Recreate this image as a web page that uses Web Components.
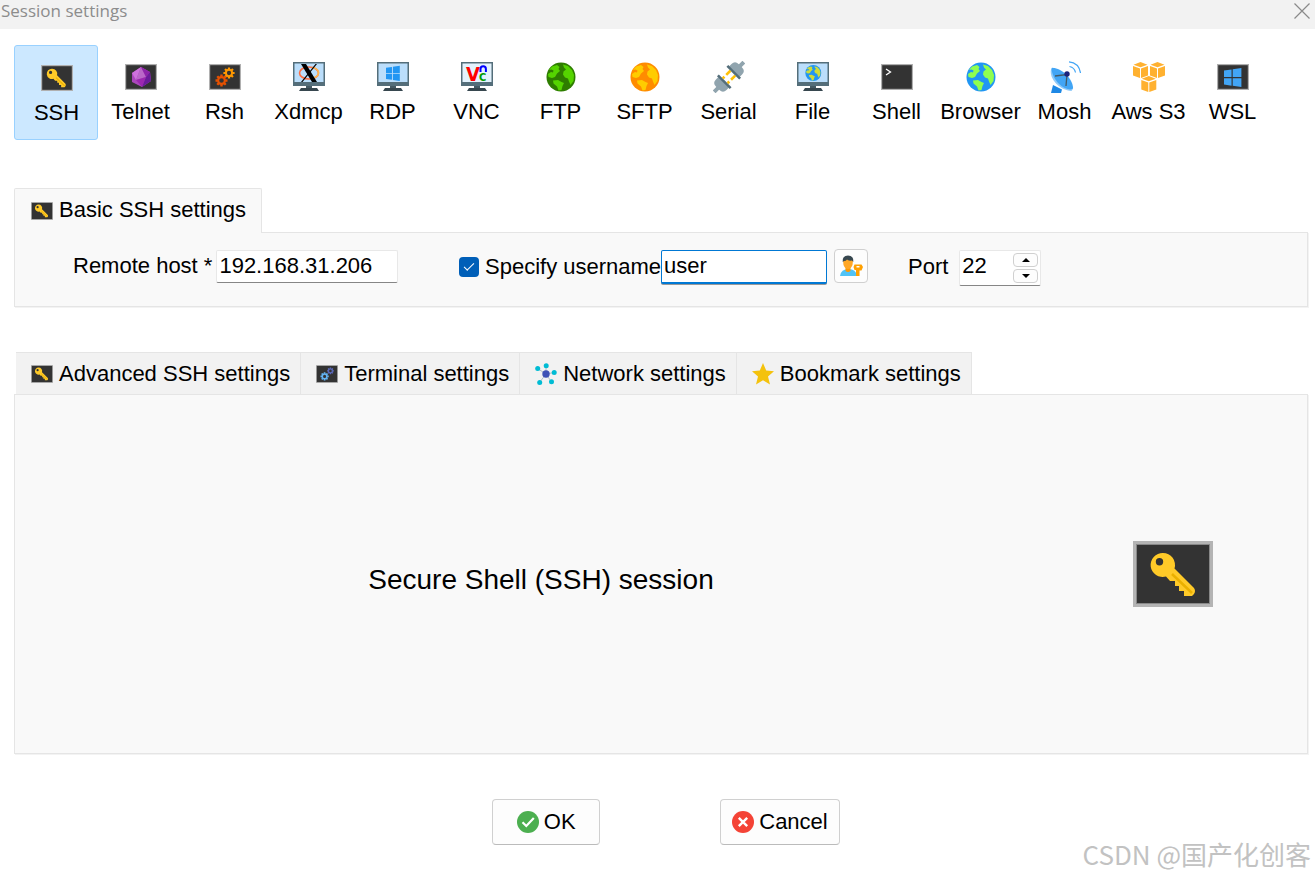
<!DOCTYPE html>
<html lang="en">
<head>
<meta charset="utf-8">
<title>Session settings</title>
<style>
  body { margin: 0; min-height: 100vh; background: #fff; color: #000; font: 22px/26px "Liberation Sans", Arial, sans-serif; }
</style>
</head>
<body>
<session-window></session-window>

<script>
const land = '<path d="M18 3.500l5 1.500 4 4 2 5-.5 6-3 4-1.500-3.500-1-3-3-1-2-3 .5-3 2.500-2-2-2z"/><path d="M4 9l3-3.500 5-1.500 2.500 2-1 2 1.500 2-3 2.500-2 3.500-3 1-3.500-1-.5-3 3-2 2 .5.5-2-2-1z"/><path d="M8 19.500l5-.5 3.500 2 2.500 1-1.500 3-1 4-3 .5-1.500-4-3.500-3z"/>';
const globe = (sea, soil) => `<circle cx="16" cy="16" r="14.500" fill="${sea}"/><g fill="${soil}">${land}</g>`;
const term = inner => `<path fill="#b0b0b0" d="M0 0h32v26H0z"/><path fill="#333" d="M1.200 1.200h29.600v23.600H1.200z"/>${inner}`;
const monitor = (inner, screen = '#bbdefb') => `<path fill="#546e7a" d="M0 1h32v24H0z"/><path fill="${screen}" d="M1.500 2.500h29V21h-29z"/><path fill="#455a64" d="M13 25h6v2h-6z"/><path fill="#37474f" d="M8 27h16l2 3H6z"/>${inner}`;
const flag = (x, y, s, c) => `<g transform="translate(${x} ${y}) scale(${s})" fill="${c}"><path d="M0 2l6.500-1v6.500H0zM7.500.85L15-.2v7.700H7.500zM0 8.500h6.500V15L0 14zM7.500 8.500H15v7.700l-7.500-1.050z"/></g>`;
const gear = (x, y, r, c) => `<g transform="translate(${x} ${y})" stroke="${c}" fill="none"><circle r="${r * .56}" stroke-width="${r * .36}"/>${[0, 45, 90, 135].map(a => `<path transform="rotate(${a})" stroke-width="${r * .4}" d="M0 ${-r}V${-r * .62}M0 ${r}V${r * .62}"/>`).join('')}</g>`;
const cube = (x, y) => `<g transform="translate(${x} ${y})"><path fill="#ffb130" d="M7.500 0L14.500 2.700 7.500 5.200.5 2.700zM0 4l7 2.600V16L0 13.400zM15 4L8 6.600V16l7-2.600z"/></g>`;
const KEY = '<path fill="#ffca28" fill-rule="evenodd" d="M30 12a12 12 0 0 1 11.500 15.500L61 47q2 3 0 6l-2 2h-8v-5h-5v-5h-4v-5h-5l-4-4.500A12 12 0 1 1 30 12zM26.500 17a3.700 3.700 0 1 0 0 7.400 3.700 3.700 0 0 0 0-7.400z"/><path stroke="#eab000" stroke-width="2.500" d="M39 33l20 19"/>';

const ICONS = {
  key: ['0 0 32 26', term(`<g transform="translate(-1.800 -1.500) scale(.43)">${KEY}</g>`)],
  bigkey: ['0 0 80 66', `<path fill="#b4b4b4" d="M0 0h80v66H0z"/><path fill="#888" d="M3 3h74v60H3z"/><path fill="#333" d="M4 4h72v58H4z"/>${KEY}`],
  gem: ['0 0 32 26', term('<path fill="#ab47bc" d="M16 3l9 5 1 9-9 6-10-5V9z"/><path fill="#ce72dc" d="M16 3L7 9l4 7z"/><path fill="#ba68c8" d="M16 3l-5 13 10-3z"/><path fill="#8e24aa" d="M16 3l9 5-4 5z"/><path fill="#9c27b0" d="M11 16l10-3-4 10z"/><path fill="#6a1b9a" d="M25 8l1 9-9 6 4-10z"/>')],
  gears: ['0 0 32 26', term(gear(20, 9, 5.6, '#ff9800') + gear(12.5, 16.5, 6, '#e65100'))],
  bluegears: ['0 0 32 26', term(gear(21, 8.5, 5, '#5c6bc0') + gear(12.5, 16.5, 6, '#64b5f6'))],
  shell: ['0 0 32 26', term('<path fill="none" stroke="#fff" stroke-width="1.300" d="M5 5l4.500 3L5 11"/>')],
  wsl: ['0 0 32 26', term(flag(7, 4.3, 1.16, '#42a5f5'))],
  xdmcp: ['0 0 32 32', monitor('<ellipse cx="16" cy="12" rx="9.500" ry="6" fill="none" stroke="#ff6e40" stroke-width="1.600"/><path d="M19 6.500q7 1.500 6.500 5.500t-6 5" fill="none" stroke="#ffb74d" stroke-width="1.600"/><path d="M8 3h5l11 18h-5z"/><path d="M22.500 3h1.500L9.500 21H8z"/>')],
  rdp: ['0 0 32 32', monitor(flag(9, 5, .92, '#2196f3'))],
  vnc: ['0 0 32 32', monitor('<g font-family="DejaVu Sans Condensed, DejaVu Sans" font-weight="700"><text x="5" y="20" font-size="20" fill="#f00">V</text><text x="18" y="20" font-size="11" fill="#090">C</text></g><path d="M19.500 11V8a2.700 2.700 0 0 1 5.400 0v3" fill="none" stroke="#00f" stroke-width="2"/>', '#e3f2fd')],
  ftp: ['0 0 32 32', globe('#2e7d00', '#55d400')],
  sftp: ['0 0 32 32', globe('#ff8c00', '#ffcc00')],
  browser: ['0 0 32 32', globe('#2196f3', '#8fff4f')],
  file: ['0 0 32 32', monitor(`<g transform="translate(7.500 3.200) scale(.55)">${globe('#2196f3', '#cddc39')}</g>`)],
  serial: ['0 0 32 32', '<g transform="rotate(45 16 16)"><path fill="#90a4ae" d="M14-5h4v6h-4zM14 31h4v6h-4z"/><path fill="#90a4ae" d="M8.500 8.500V5q0-5 5-5h5q5 0 5 5v3.500zM8.500 23.500V27q0 5 5 5h5q5 0 5-5v-3.500z"/><path fill="#546e7a" d="M7 8h18v2.600H7zM7 21.400h18V24H7z"/><path fill="#ffc107" d="M11.300 10.600h2.600v5.900h-2.600zM18.100 10.600h2.600v5.900h-2.600z"/><path fill="#ffc107" d="M11.300 19h2.600v2.400h-2.600zM18.100 19h2.600v2.400h-2.600z"/></g>'],
  mosh: ['0 0 32 32', '<path fill="#1e88e5" d="M4 24l9 4.500-1 3.500H2z"/><path fill="#90caf9" d="M2.500 7C-1 15 8 29 22.500 30q2-2 1.500-3.500L4 6.500z"/><path fill="#42a5f5" d="M3 7c8-1 21 10 21 20-1 3-9 1-14-4S1.500 9.500 3 7z"/><path fill="none" stroke="#455a64" stroke-width="1.300" d="M6 15l12-1.500-1 11.500"/><circle cx="18" cy="13" r="2.700" fill="#1a237e"/><path fill="none" stroke="#42a5f5" stroke-width="1.200" d="M20 .8q10 1 11.500 11.200M20.500 5.500q5 1 6 6"/>'],
  aws: ['0 0 32 32', cube(0, 1) + cube(17, 1) + cube(8.3, 15)],
  network: ['0 0 22 22', '<path stroke="#b0bec5" stroke-width="1" d="M11 11L2.500 5.500M11 11V2.500M11 11l8.500-1.500M11 11l5.500 8M11 11l-6.500 8.500"/><circle cx="11" cy="11" r="3.700" fill="#3f51b5"/><g fill="#00bcd4"><circle cx="2.700" cy="5.500" r="2.500"/><circle cx="11.200" cy="2.700" r="2.500"/><circle cx="19.200" cy="9.500" r="2.500"/><circle cx="16.500" cy="18.700" r="2.500"/><circle cx="4.700" cy="19.500" r="2.500"/></g>'],
  star: ['0 0 22 22', '<path fill="#f4c20d" d="M11 0l3.200 7.500 7.800.7-6 5.200L18 21.500l-7-4.300-7 4.300 2-8.100-6-5.200 7.800-.7z"/>'],
  user: ['0 0 24 24', '<path fill="#4fc3f7" d="M1 22q1-7 8.500-7T18 22z"/><path fill="#ff9800" d="M6.500 13h5v4q-2.500 2-5 0z"/><path fill="#ffa726" d="M4 6q5-4 10 0l-.5 5q-1.500 4-4.500 4t-4.500-4z"/><path fill="#37474f" d="M3.700 8Q3 1.500 9 1.500T14.300 8L13 6.500q-4 .5-5-1-1 1.500-3 1.500z"/><path fill="#ffa000" fill-rule="evenodd" d="M15.500 10.500h7L24 13l-1.500 3.500h-2V22H17v-6h-1.500L14.500 13zM17.500 12v1.500h3V12z"/>'],
  ok: ['0 0 22 22', '<circle cx="11" cy="11" r="11" fill="#4caf50"/><path fill="none" stroke="#fff" stroke-width="2.200" d="M5.500 11.200l3.800 3.800 7.500-8"/>'],
  cancel: ['0 0 22 22', '<circle cx="11" cy="11" r="11" fill="#f44336"/><path stroke="#fff" stroke-width="2.400" d="M6.800 6.800l8.400 8.400M15.200 6.800l-8.400 8.400"/>'],
  close: ['0 0 16 16', '<path stroke="#8a8a8a" stroke-width="1.200" d="M.5.500l15 15M15.500.500l-15 15"/>'],
};

function define(name, render) {
  customElements.define(name, class extends HTMLElement {
    constructor() { super(); this.attachShadow({ mode: 'open' }); }
    connectedCallback() {
      const t = document.createElement('template');
      t.innerHTML = render(this);
      this.shadowRoot.replaceChildren(t.content.cloneNode(true));
    }
  });
}

define('app-icon', el => {
  const [box, body] = ICONS[el.getAttribute('name')];
  return `<style>:host{display:block;flex:none;width:22px;height:22px}svg{display:block;width:100%;height:100%}</style><svg viewBox="${box}" aria-hidden="true">${body}</svg>`;
});

define('title-bar', () => `
<style>
  :host { display: flex; justify-content: space-between; align-items: flex-start; height: 29px; background: #f2f2f2; color: #8c8c8c; font: 17px/22px "Open Sans", "Noto Sans", sans-serif; }
  h1 { margin: 0; padding-left: 1px; font: inherit; }
  button { margin: 0; padding: 3px 5px; border: 0; background: none; }
  app-icon { width: 16px; height: 16px; }
</style>
<h1><slot></slot></h1><button aria-label="Close"><app-icon name="close"></app-icon></button>`);

define('session-type', el => `
<style>
  :host { display: block; flex: 0 1 84px; min-width: 0; }
  button { box-sizing: border-box; display: flex; flex-direction: column; align-items: center; gap: 6px; width: 100%; height: 95px; margin: 0; padding: 15px 0 0 1px; border: 1px solid transparent; border-radius: 3px; background: none; color: inherit; font: inherit; white-space: nowrap; }
  :host([selected]) button { background: #cce8ff; border-color: #99d1ff; padding-top: 16px; }
  .pic { display: flex; align-items: center; height: 32px; padding-left: 1px; }
  app-icon { width: 32px; height: 32px; }
</style>
<button aria-pressed="${el.hasAttribute('selected')}"><span class="pic"><app-icon name="${el.getAttribute('icon')}"></app-icon></span><slot></slot></button>`);

define('tab-item', el => `
<style>
  :host { display: block; }
  button { display: flex; align-items: center; gap: 6px; box-sizing: border-box; height: 42px; margin: 0; padding: 0 10px 0 15px; border: solid #e5e5e5; border-width: 1px 1px 0 0; background: #f2f2f2; color: inherit; font: inherit; white-space: nowrap; }
  :host([selected]) button { height: 45px; padding: 0 15px 2px 16px; border-left-width: 1px; background: #f9f9f9; border-radius: 2px 2px 0 0; }
  app-icon { margin-top: 1px; }
</style>
<button role="tab" aria-selected="${el.hasAttribute('selected')}"><app-icon name="${el.getAttribute('icon')}"></app-icon><slot></slot></button>`);

define('tab-panel', () => `
<style>
  :host { display: block; }
  .tabs { display: flex; }
  .body { border: 1px solid #e5e5e5; background: #f9f9f9; box-shadow: 1px 1px 0 #f3f3f3; }
  :host([active]) .tabs { position: relative; margin-bottom: -1px; }
  :host(:not([active])) .tabs { padding-left: 2px; }
</style>
<div class="tabs" role="tablist"><slot name="tab"></slot></div><div class="body" role="tabpanel"><slot></slot></div>`);

define('connection-form', () => `
<style>
  :host { display: flex; align-items: flex-start; box-sizing: border-box; height: 73px; padding: 16px 16px 0 58px; white-space: nowrap; }
  div { display: flex; align-items: flex-start; }
  label { line-height: 34px; }
  input { box-sizing: border-box; height: 33px; margin: 0; padding: 0 2px 1px; border: 1px solid #e8e8e8; border-bottom-color: #868686; border-radius: 2px; outline: 0; background: #fff; color: inherit; font: inherit; }
  .host, .user, .port { padding-top: 1px; }
  .host { gap: 4px; width: 325px; margin-right: 61px; }
  .host label { line-height: 32px; }
  .host input { flex: 1; min-width: 0; }
  .user { width: 368px; }
  .user label { padding-left: 6px; }
  .user input[type=text] { flex: 1; min-width: 0; height: 34px; border: 1px solid #0078d4; border-bottom-width: 2px; box-shadow: 0 1px 0 #999; }
  input[type=checkbox] { appearance: none; flex: none; width: 20px; height: 20px; margin: 7px 0 0; padding: 0; border: 0; border-radius: 4px; background: #005fb8; display: grid; place-content: center; }
  input[type=checkbox]:checked::before { content: ""; width: 9px; height: 4px; margin-bottom: 3px; border: solid #fff; border-width: 0 0 1px 1px; transform: rotate(-45deg); }
  .pick { display: grid; place-content: center; width: 34px; height: 34px; margin: 0 40px 0 7px; padding: 0; border: 1px solid #d0d0d0; border-radius: 4px; background: #fdfdfd; }
  .pick app-icon { width: 24px; height: 24px; }
  .port { gap: 11px; }
  .spin { box-sizing: border-box; width: 82px; height: 36px; padding-right: 2px; border: 1px solid #e8e8e8; border-bottom-color: #868686; border-radius: 2px; background: #fff; }
  .spin input { flex: 1; min-width: 0; height: 31px; border: 0; appearance: textfield; }
  .spin input::-webkit-inner-spin-button { appearance: none; }
  .steps { flex-direction: column; gap: 2px; padding-top: 2px; }
  .steps button { display: grid; place-content: center; width: 25px; height: 14px; margin: 0; padding: 0; border: 1px solid #d0d0d0; border-radius: 4px; background: #fdfdfd; }
  svg { display: block; width: 8px; height: 4px; }
</style>
<div class="host"><label for="host">Remote host *</label><input id="host" type="text" value="192.168.31.206"></div>
<div class="user"><input id="named" type="checkbox" checked><label for="named">Specify username</label><input type="text" aria-label="Username" value="user"></div>
<button class="pick" aria-label="Saved users"><app-icon name="user"></app-icon></button>
<div class="port"><label for="port">Port</label><div class="spin"><input id="port" type="number" value="22"><div class="steps">
<button aria-label="Increase"><svg viewBox="0 0 8 4"><path d="M0 4l4-4 4 4z"/></svg></button><button aria-label="Decrease"><svg viewBox="0 0 8 4"><path d="M0 0l4 4 4-4z"/></svg></button></div></div></div>`);

define('session-summary', () => `
<style>
  :host { display: grid; grid-template-columns: 1fr 240px; align-items: center; height: 358px; }
  h2 { margin: 0; padding-top: 12px; text-align: center; font: 28px/34px "Liberation Sans", Arial, sans-serif; }
  app-icon { width: 80px; height: 66px; margin-left: 66px; }
</style>
<h2><slot></slot></h2><app-icon name="bigkey"></app-icon>`);

define('action-button', el => `
<style>
  :host { display: block; }
  button { display: flex; align-items: center; justify-content: center; gap: 5px; box-sizing: border-box; min-width: 108px; height: 46px; margin: 0; padding: 0 11px; border: 1px solid #d0d0d0; border-bottom-color: #bbb; border-radius: 4px; background: #fdfdfd; color: inherit; font: inherit; }
</style>
<button><app-icon name="${el.getAttribute('icon')}"></app-icon><slot></slot></button>`);

define('page-credit', () => `
<style>
  :host { position: absolute; right: 4px; bottom: 5px; color: #c2c2c2; font: 26px/36px "Noto Sans CJK SC", sans-serif; white-space: nowrap; }
</style><slot></slot>`);

const types = [['key','SSH'],['gem','Telnet'],['gears','Rsh'],['xdmcp','Xdmcp'],['rdp','RDP'],['vnc','VNC'],['ftp','FTP'],['sftp','SFTP'],['serial','Serial'],['file','File'],['shell','Shell'],['browser','Browser'],['mosh','Mosh'],['aws','Aws S3'],['wsl','WSL']];

define('session-window', () => `
<style>
  :host { display: block; position: relative; min-height: 100vh; }
  main { padding: 16px 7px 0 14px; }
  nav { display: flex; margin-bottom: 48px; }
  tab-panel { margin-bottom: 45px; }
  footer { display: flex; justify-content: center; gap: 120px; padding-left: 10px; }
</style>
<title-bar>Session settings</title-bar>
<main>
  <nav aria-label="Session type">${types.map(([i, n], k) => `<session-type icon="${i}"${k ? '' : ' selected'}>${n}</session-type>`).join('')}</nav>
  <tab-panel active><tab-item slot="tab" icon="key" selected>Basic SSH settings</tab-item><connection-form></connection-form></tab-panel>
  <tab-panel>
    <tab-item slot="tab" icon="key">Advanced SSH settings</tab-item><tab-item slot="tab" icon="bluegears">Terminal settings</tab-item><tab-item slot="tab" icon="network">Network settings</tab-item><tab-item slot="tab" icon="star">Bookmark settings</tab-item>
    <session-summary>Secure Shell (SSH) session</session-summary>
  </tab-panel>
  <footer><action-button icon="ok">OK</action-button><action-button icon="cancel">Cancel</action-button></footer>
</main>
<page-credit>CSDN @国产化创客</page-credit>`);
</script>
</body>
</html>
